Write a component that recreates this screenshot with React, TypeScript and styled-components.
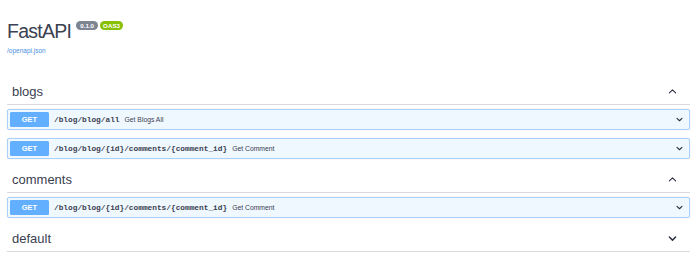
import React from "react";
import styled, { createGlobalStyle } from "styled-components";

const GlobalStyle = createGlobalStyle`
  html, body { margin: 0; padding: 0; background: #ffffff; }
  body { font-family: "Liberation Sans", Arial, sans-serif; color: #3b4151; }
`;

const Page = styled.div`
  padding: 19px 10px 0 7px;
`;

const Info = styled.div`
  display: flex;
  flex-direction: column;
  margin-bottom: 24px;
`;

const TitleRow = styled.div`
  display: flex;
  align-items: flex-start;
  gap: 2px;
`;

const Title = styled.h2`
  margin: 0 3px 0 0;
  font-size: 19.5px;
  line-height: 24px;
  letter-spacing: -0.75px;
  font-weight: 400;
  color: #3b4151;
`;

const Badge = styled.span<{ $bg: string }>`
  margin-top: 1.5px;
  height: 9px;
  min-width: 22px;
  box-sizing: border-box;
  padding: 0 3px;
  border-radius: 5px;
  background: ${(p) => p.$bg};
  color: #ffffff;
  font-size: 6.2px;
  font-weight: 700;
  line-height: 9px;
  text-align: center;
`;

const SpecLink = styled.a`
  margin-top: 4px;
  font-size: 6.5px;
  line-height: 8px;
  color: #4990e2;
  text-decoration: none;
`;

const Section = styled.section`
  display: flex;
  flex-direction: column;
`;

const TagHeader = styled.div`
  display: flex;
  align-items: center;
  justify-content: space-between;
  height: 15px;
  padding: 5px 13px 5px 5px;
  border-bottom: 1px solid #d8d9dc;
  margin-bottom: 4px;
`;

const TagName = styled.h3`
  margin: 0;
  font-size: 13px;
  line-height: 15px;
  font-weight: 400;
  color: #3b4151;
`;

const OpBlock = styled.div`
  display: flex;
  align-items: center;
  height: 21px;
  box-sizing: border-box;
  padding: 0 6px 0 2px;
  margin-bottom: 8px;
  border: 1px solid #a9d1fb;
  border-radius: 2px;
  background: #eff7ff;
  box-shadow: 0 0 1.5px rgba(0, 0, 0, 0.12);
`;

const Method = styled.span`
  width: 39px;
  height: 15px;
  border-radius: 1.5px;
  background: #61affe;
  color: #ffffff;
  font-size: 7.5px;
  font-weight: 700;
  line-height: 15px;
  text-align: center;
  flex-shrink: 0;
`;

const Path = styled.span`
  margin-left: 5px;
  font-family: "Liberation Mono", "Courier New", monospace;
  font-size: 7.8px;
  font-weight: 700;
  color: #3b4151;
`;

const Summary = styled.span`
  margin-left: 5px;
  font-size: 6.8px;
  color: #3b4151;
  flex: 1;
`;

const Chevron: React.FC<{ size: number; up?: boolean }> = ({ size, up }) => (
  <svg
    width={size}
    height={size}
    viewBox="0 0 20 20"
    style={{ transform: up ? "rotate(180deg)" : undefined, flexShrink: 0 }}
  >
    <path
      fill="none"
      stroke="#2b3040"
      strokeWidth={up ? 2.4 : 3.2}
      strokeLinecap="round"
      strokeLinejoin="round"
      d="M3 6.8 L10 13.6 L17 6.8"
    />
  </svg>
);

type Op = { path: string; summary: string };

const sections: { name: string; open: boolean; ops: Op[] }[] = [
  {
    name: "blogs",
    open: true,
    ops: [
      { path: "/blog/blog/all", summary: "Get Blogs All" },
      { path: "/blog/blog/{id}/comments/{comment_id}", summary: "Get Comment" },
    ],
  },
  {
    name: "comments",
    open: true,
    ops: [{ path: "/blog/blog/{id}/comments/{comment_id}", summary: "Get Comment" }],
  },
  { name: "default", open: false, ops: [] },
];

export default function App() {
  return (
    <>
      <GlobalStyle />
      <Page>
        <Info>
          <TitleRow>
            <Title>FastAPI</Title>
            <Badge $bg="#7d8492">0.1.0</Badge>
            <Badge $bg="#89bf04">OAS3</Badge>
          </TitleRow>
          <SpecLink href="#">/openapi.json</SpecLink>
        </Info>
        {sections.map((s) => (
          <Section key={s.name}>
            <TagHeader>
              <TagName>{s.name}</TagName>
              <Chevron size={9} up={s.open} />
            </TagHeader>
            {s.ops.map((o, i) => (
              <OpBlock key={i}>
                <Method>GET</Method>
                <Path>{o.path}</Path>
                <Summary>{o.summary}</Summary>
                <Chevron size={7} />
              </OpBlock>
            ))}
          </Section>
        ))}
      </Page>
    </>
  );
}
